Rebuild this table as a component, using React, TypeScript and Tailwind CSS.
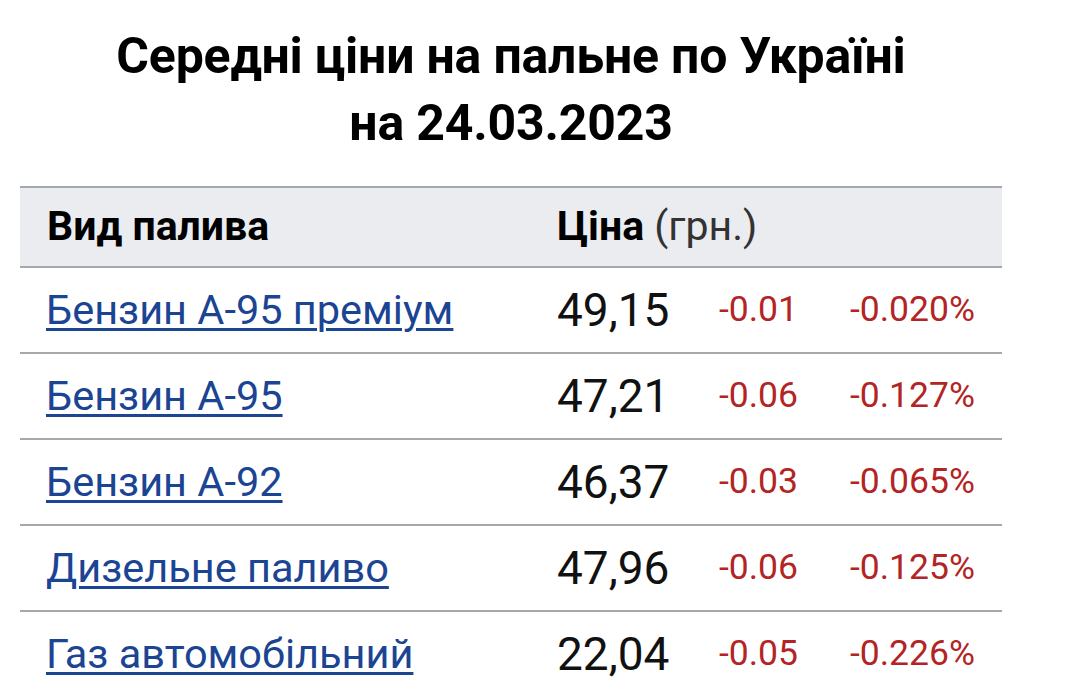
const rows = [
  { name: 'Бензин А-95 преміум', price: '49,15', diff: '-0.01', pct: '-0.020%' },
  { name: 'Бензин А-95', price: '47,21', diff: '-0.06', pct: '-0.127%' },
  { name: 'Бензин А-92', price: '46,37', diff: '-0.03', pct: '-0.065%' },
  { name: 'Дизельне паливо', price: '47,96', diff: '-0.06', pct: '-0.125%' },
  { name: 'Газ автомобільний', price: '22,04', diff: '-0.05', pct: '-0.226%' },
];

export default function App() {
  return (
    <div className="w-[1080px] h-[688px] overflow-hidden bg-white font-['Roboto',sans-serif] text-black">
      <div className="ml-[20px] w-[982px]">
        {/* Title */}
        <h1 className="pt-[23px] text-center text-[50px] leading-[67px] font-bold tracking-[-0.2px]">
          Середні ціни на пальне по Україні
          <br />
          на 24.03.2023
        </h1>

        {/* Table */}
        <table className="mt-[29px] w-full border-collapse">
          <colgroup>
            <col className="w-[537px]" />
            <col className="w-[162px]" />
            <col className="w-[131px]" />
            <col />
          </colgroup>
          <thead>
            <tr className="h-[80px] bg-[#eaecf0] border-t-2 border-b-2 border-[#a2a9b1]">
              <th className="pl-[27px] text-left text-[41px] font-bold">Вид палива</th>
              <th colSpan={3} className="text-left text-[41px] font-bold">
                Ціна <span className="font-normal text-[#333]">(грн.)</span>
              </th>
            </tr>
          </thead>
          <tbody>
            {rows.map((r) => (
              <tr key={r.name} className="h-[86px] border-b-2 border-[#a8a8a8]">
                <td className="pl-[26px]">
                  <a href="#" className="text-[41.5px] text-[#1b4493] underline decoration-[3px] underline-offset-[4px]">
                    {r.name}
                  </a>
                </td>
                <td className="text-[46px] text-[#111]">{r.price}</td>
                <td className="text-[35.5px] text-[#b32424]">{r.diff}</td>
                <td className="text-[35.5px] text-[#b32424]">{r.pct}</td>
              </tr>
            ))}
          </tbody>
        </table>
      </div>
    </div>
  );
}
